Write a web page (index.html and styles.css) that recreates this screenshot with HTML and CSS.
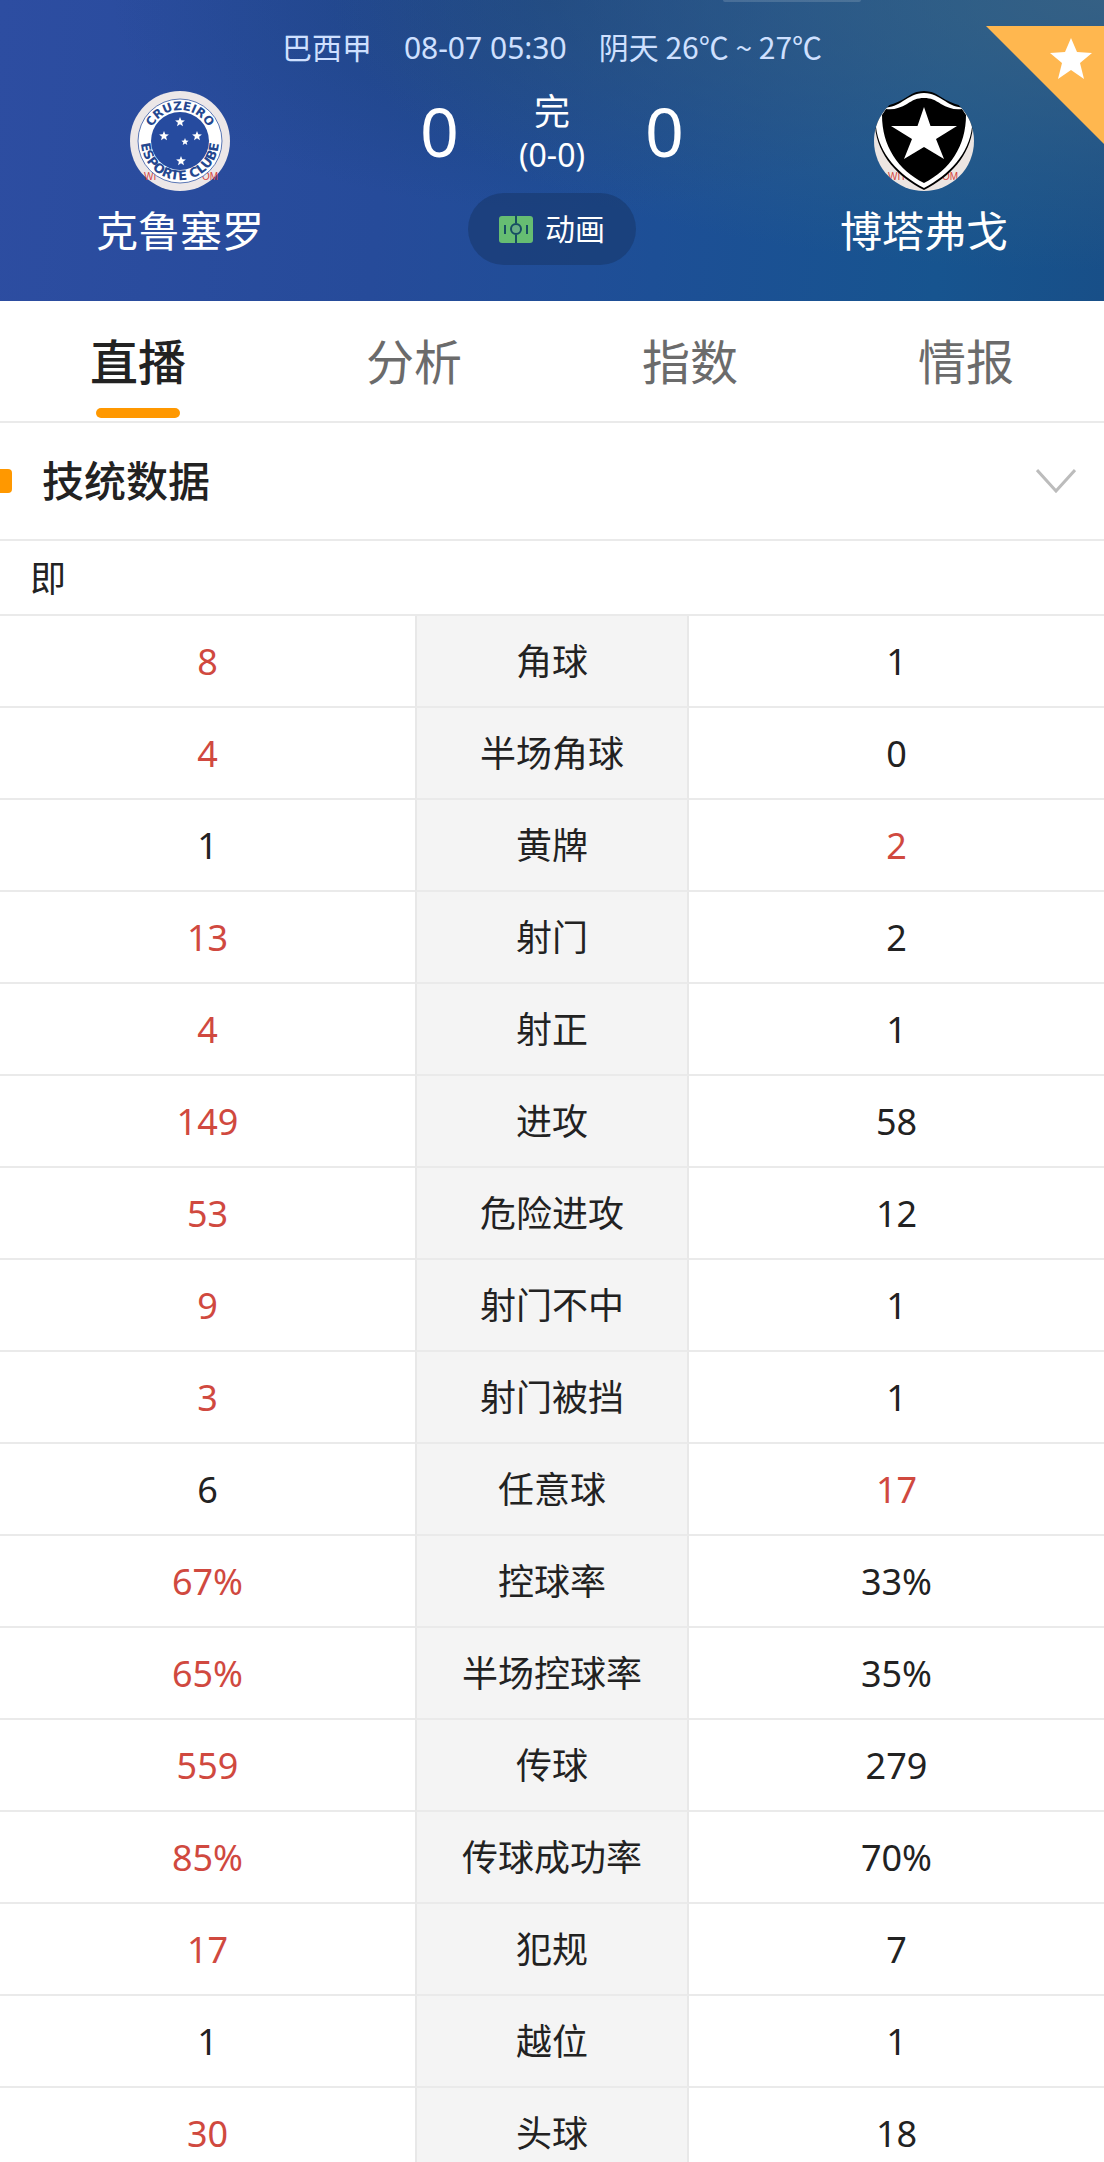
FILE: index.html
```html
<!DOCTYPE html>
<html lang="zh-CN">
<head>
<meta charset="utf-8">
<meta name="viewport" content="width=device-width, initial-scale=1">
<title>克鲁塞罗 - 博塔弗戈</title>
<link rel="stylesheet" href="styles.css">
</head>
<body>
<div class="app">
  <header class="match">
    <span class="pull-handle"></span>
    <button class="favorite" type="button" aria-label="收藏">
      <svg viewBox="0 0 118 118" width="118" height="118" aria-hidden="true">
        <path d="M0 0H118V118Z" fill="#ffb74f"/>
        <path d="M85 12l6 14 15 1-12 10 4 16-13-9-13 9 4-16-12-10 15-1z" fill="#fff"/>
      </svg>
    </button>
    <p class="match-info"><span>巴西甲</span><span>08-07 05:30</span><span class="weather">阴天 26℃ ~ 27℃</span></p>
    <div class="scoreboard">
      <div class="team">
        <svg class="crest" viewBox="0 0 100 100" role="img" aria-label="Cruzeiro Esporte Clube">
          <defs>
            <path id="arc-top" d="M19 50A31 31 0 0 1 81 50"/>
            <path id="arc-bottom" d="M11 50A39 39 0 0 0 89 50"/>
            <path id="star" d="M0-5l1.300 3.300 3.600.200-2.800 2.300.900 3.500-3-2-3 2 .900-3.500-2.800-2.300 3.600-.200z"/>
          </defs>
          <circle cx="50" cy="50" r="50" fill="#ece7e8"/>
          <g class="crest-mark"><text x="14" y="89">WI</text><text x="72" y="89">OM</text></g>
          <circle cx="50" cy="50" r="42" fill="#fff" stroke="#5b77b5" stroke-width="1"/>
          <circle cx="50" cy="50" r="29" fill="#264b9f"/>
          <text class="crest-text"><textPath href="#arc-top" startOffset="50%" text-anchor="middle">CRUZEIRO</textPath></text>
          <text class="crest-text crest-text-bottom"><textPath href="#arc-bottom" startOffset="50%" text-anchor="middle">ESPORTE CLUBE</textPath></text>
          <g fill="#fff">
            <use href="#star" x="50" y="31"/>
            <use href="#star" x="34" y="45"/>
            <use href="#star" x="67" y="45"/>
            <use href="#star" x="51" y="70"/>
            <path d="M55 47l1 2.500 2.600.200-2 1.700.700 2.600-2.300-1.500-2.300 1.500.700-2.600-2-1.700 2.600-.200z"/>
          </g>
        </svg>
        <span class="team-name">克鲁塞罗</span>
      </div>
      <div class="center">
        <div class="result">
          <span class="score">0</span>
          <div class="status"><span class="state">完</span><span class="half">(0-0)</span></div>
          <span class="score">0</span>
        </div>
        <button class="animation" type="button">
          <svg viewBox="0 0 34 28" width="34" height="28" aria-hidden="true">
            <rect x="0" y="1" width="34" height="27" rx="3" fill="#66bd72"/>
            <path d="M17 0V8M17 20V28M6 10V19M28 10V19" stroke="#164d63" stroke-width="2" fill="none"/>
            <circle cx="17" cy="14" r="5" stroke="#164d63" stroke-width="2" fill="#67ae84"/>
          </svg>
          <span>动画</span>
        </button>
      </div>
      <div class="team">
        <svg class="crest" viewBox="0 0 100 100" role="img" aria-label="Botafogo">
          <defs><clipPath id="round"><circle cx="50" cy="50" r="50"/></clipPath></defs>
          <g clip-path="url(#round)">
            <path d="M-2 36L50 60 102 36V100H-2Z" fill="#ece5e2"/>
            <g class="crest-mark"><text x="14" y="89">WIT</text><text x="68" y="89">OM</text></g>
            <path d="M50 0C40 0 35 5 28 9 22 12 17 14 11 15 5 21 1 27 1 36 4 65 24 86 50 99 76 86 96 65 99 36 99 27 95 21 89 15 83 14 78 12 72 9 65 5 60 0 50 0Z" fill="#000"/>
            <path d="M50 2C41 2 36 6 29 10 23 14 18 16 10 17 5 22 2 27 2 36 5 63 25 84 50 97 75 84 95 63 98 36 98 27 95 22 90 17 82 16 77 14 71 10 64 6 59 2 50 2Z" fill="#fff"/>
            <path d="M50 7C43 7 39 9 33 13 26 17 20 19 12 18L8 24C8 55 24 79 50 92 76 79 92 55 92 24L88 18C80 19 74 17 67 13 61 9 57 7 50 7Z" fill="#000"/>
            <path d="M50 16L56.500 35H83L62 48 70 68 50 56 30 68 38 48 17 35H43.500Z" fill="#fff"/>
          </g>
        </svg>
        <span class="team-name">博塔弗戈</span>
      </div>
    </div>
  </header>

  <nav class="tabs">
    <a class="tab tab-active" href="#live" aria-current="page">直播</a>
    <a class="tab" href="#analysis">分析</a>
    <a class="tab" href="#odds">指数</a>
    <a class="tab" href="#intel">情报</a>
  </nav>

  <main class="content" id="live">
    <div class="section-head">
      <h2 class="section-title">技统数据</h2>
      <button class="collapse" type="button" aria-label="收起">
        <svg viewBox="0 0 40 24" width="40" height="24" aria-hidden="true"><path d="M1 1L20 22 39 1" fill="none" stroke="#bcbcbc" stroke-width="3"/></svg>
      </button>
    </div>
    <p class="period">即</p>
    <table class="stats">
      <colgroup><col><col class="col-name"><col></colgroup>
      <tbody>
        <tr><td class="lead">8</td><th scope="row">角球</th><td>1</td></tr>
        <tr><td class="lead">4</td><th scope="row">半场角球</th><td>0</td></tr>
        <tr><td>1</td><th scope="row">黄牌</th><td class="lead">2</td></tr>
        <tr><td class="lead">13</td><th scope="row">射门</th><td>2</td></tr>
        <tr><td class="lead">4</td><th scope="row">射正</th><td>1</td></tr>
        <tr><td class="lead">149</td><th scope="row">进攻</th><td>58</td></tr>
        <tr><td class="lead">53</td><th scope="row">危险进攻</th><td>12</td></tr>
        <tr><td class="lead">9</td><th scope="row">射门不中</th><td>1</td></tr>
        <tr><td class="lead">3</td><th scope="row">射门被挡</th><td>1</td></tr>
        <tr><td>6</td><th scope="row">任意球</th><td class="lead">17</td></tr>
        <tr><td class="lead">67%</td><th scope="row">控球率</th><td>33%</td></tr>
        <tr><td class="lead">65%</td><th scope="row">半场控球率</th><td>35%</td></tr>
        <tr><td class="lead">559</td><th scope="row">传球</th><td>279</td></tr>
        <tr><td class="lead">85%</td><th scope="row">传球成功率</th><td>70%</td></tr>
        <tr><td class="lead">17</td><th scope="row">犯规</th><td>7</td></tr>
        <tr><td>1</td><th scope="row">越位</th><td>1</td></tr>
        <tr><td class="lead">30</td><th scope="row">头球</th><td>18</td></tr>
      </tbody>
    </table>
  </main>
</div>
</body>
</html>
```

FILE: styles.css
```css
* {
  box-sizing: border-box;
}

body,
p,
h2 {
  margin: 0;
}

body {
  font-family: "Noto Sans", "Noto Sans CJK SC", sans-serif;
  color: #222;
  background: #fff;
}

button {
  margin: 0;
  padding: 0;
  border: 0;
  background: none;
  font: inherit;
  color: inherit;
  cursor: pointer;
}

svg {
  display: block;
}

.app {
  display: flex;
  flex-direction: column;
  height: 100vh;
  overflow: hidden;
}

/* Match header */
.match {
  position: relative;
  flex: none;
  padding: 26px 0 36px;
  color: #fff;
  background:
    radial-gradient(ellipse 70% 90% at 100% 0, rgba(56, 98, 132, 0.9), rgba(56, 98, 132, 0)),
    radial-gradient(ellipse 40% 70% at 50% 0, rgba(26, 66, 122, 0.7), rgba(26, 66, 122, 0)),
    linear-gradient(95deg, #2d4da1 0%, #264b9a 35%, #1d4f96 60%, #17548f 85%, #184f88 100%);
}

.pull-handle {
  position: absolute;
  top: 0;
  right: 22%;
  width: 138px;
  height: 2px;
  border-radius: 0 0 4px 4px;
  background: rgba(255, 255, 255, 0.15);
}

.favorite {
  position: absolute;
  top: 26px;
  right: 0;
}

.match-info {
  display: flex;
  justify-content: center;
  align-items: baseline;
  gap: 32px;
  height: 42px;
  font-size: 30px;
  line-height: 40px;
  color: #cfe0ff;
}

.weather {
  font-family: "Noto Sans CJK SC", sans-serif;
}

.scoreboard {
  display: grid;
  grid-template-columns: 360px 1fr 360px;
  padding-top: 23px;
}

.team {
  display: flex;
  flex-direction: column;
  align-items: center;
  gap: 14px;
}

.crest {
  width: 100px;
  height: 100px;
}

.crest-text {
  font: bold 12px "DejaVu Sans", sans-serif;
  fill: #24478f;
}

.crest-text-bottom {
  font-size: 13px;
}

.crest-mark {
  font: 10px "Liberation Sans", sans-serif;
  fill: #d5453f;
}

.team-name {
  font-size: 42px;
  line-height: 52px;
}

.center {
  display: flex;
  flex-direction: column;
  align-items: center;
  gap: 16px;
}

.result {
  display: flex;
  justify-content: center;
  gap: 60px;
}

.score {
  font-size: 68px;
  line-height: 80px;
}

.status {
  display: flex;
  flex-direction: column;
  align-items: center;
}

.state {
  font-size: 36px;
  line-height: 42px;
}

.half {
  font-size: 32px;
  line-height: 44px;
}

.animation {
  display: flex;
  align-items: center;
  justify-content: center;
  gap: 12px;
  width: 168px;
  height: 72px;
  border-radius: 36px;
  background: rgba(22, 52, 100, 0.5);
  font-size: 30px;
  line-height: 42px;
}

/* Tabs */
.tabs {
  display: grid;
  grid-template-columns: repeat(4, 1fr);
  flex: none;
  border-bottom: 2px solid #eaeaea;
}

.tab {
  display: flex;
  flex-direction: column;
  align-items: center;
  height: 120px;
  padding-top: 28px;
  font-size: 48px;
  line-height: 66px;
  color: #6b6b6b;
  text-decoration: none;
}

.tab-active {
  color: #222;
  font-weight: 500;
}

.tab-active::after {
  content: "";
  width: 84px;
  height: 10px;
  margin-top: 13px;
  border-radius: 5px;
  background: #ff9800;
}

/* Section */
.content {
  flex: 1;
  min-height: 0;
  overflow-y: auto;
  scrollbar-width: none;
}

.section-head {
  display: flex;
  align-items: center;
  height: 118px;
  padding-right: 28px;
  border-bottom: 2px solid #eaeaea;
}

.section-head::before {
  content: "";
  width: 12px;
  height: 24px;
  border-radius: 0 4px 4px 0;
  background: #ff9800;
}

.section-title {
  flex: 1;
  padding-left: 30px;
  font-size: 42px;
  font-weight: 500;
  line-height: 60px;
}

.period {
  padding: 13px 30px 11px;
  border-bottom: 2px solid #eaeaea;
  font-size: 36px;
  line-height: 49px;
}

.stats {
  width: 100%;
  table-layout: fixed;
  border-collapse: separate;
  border-spacing: 0;
}

.col-name {
  width: 274px;
}

.stats td,
.stats th {
  height: 92px;
  padding: 2px 0 0;
  border-bottom: 2px solid #eaeaea;
  font-size: 36px;
  font-weight: 400;
  line-height: 50px;
  text-align: center;
  vertical-align: middle;
}

.stats th {
  border-right: 2px solid #e8e8e8;
  border-left: 2px solid #e8e8e8;
  background: #f4f4f4;
}

.stats .lead {
  color: #d0493f;
}
```
